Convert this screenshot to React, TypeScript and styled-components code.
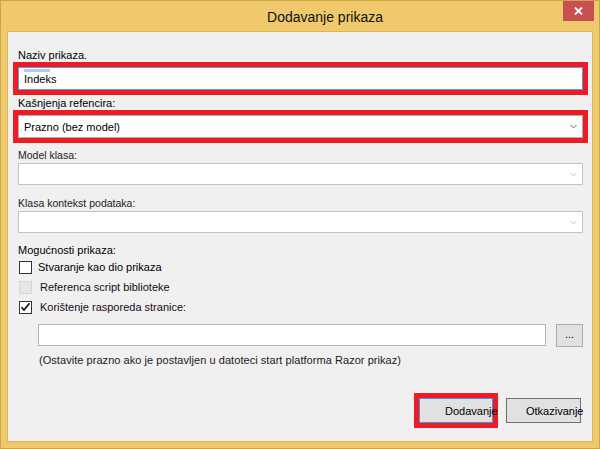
import React from 'react';
import styled, { createGlobalStyle } from 'styled-components';

const GlobalStyle = createGlobalStyle`
  html, body {
    margin: 0;
    padding: 0;
    background: #f0c96d;
  }
  body {
    font-family: "Liberation Sans", Arial, sans-serif;
  }
`;

const Window = styled.div`
  width: 600px;
  height: 449px;
  box-sizing: border-box;
  background: #f0c96d;
  border: 1px solid #c9a54b;
  display: flex;
  flex-direction: column;
`;

const TitleBar = styled.div`
  height: 29px;
  position: relative;
  display: flex;
  align-items: center;
  justify-content: center;
  font-size: 14px;
  color: #111;
  padding: 1px 0 0 50px;
`;

const CloseButton = styled.div`
  position: absolute;
  top: 0;
  right: 5px;
  width: 31px;
  height: 20px;
  background: #c75050;
  display: flex;
  align-items: center;
  justify-content: center;
`;

const Client = styled.div`
  flex: 1;
  margin: 0 6px 6px 6px;
  border: 1px solid #d9b55c;
  background: #f0f0f0;
  display: flex;
  flex-direction: column;
  padding: 0 9px 0 10px;
  font-size: 11px;
  color: #000;
`;

const Label = styled.div<{ $top: number; $small?: boolean }>`
  margin-top: ${p => p.$top}px;
  height: 14px;
  line-height: 14px;
  font-size: ${p => (p.$small ? '10.5px' : '11px')};
  color: ${p => (p.$small ? '#222' : '#000')};
`;

const Highlight = styled.div`
  margin: 0 -5px;
  border: 5px solid #ed1c24;
`;

const TextBox = styled.div<{ $focused?: boolean }>`
  position: relative;
  height: 23px;
  box-sizing: border-box;
  background: #fff;
  border: 1px solid ${p => (p.$focused ? '#5b9bd8' : '#b9b9b9')};
  display: flex;
  align-items: center;
  padding-left: 5px;
  font-size: 11px;
`;

const Selection = styled.span`
  position: absolute;
  left: 5px;
  top: 1px;
  width: 26px;
  height: 3px;
  background: #a9d0f3;
`;

const ComboBox = styled.div<{ $disabled?: boolean; $height: number }>`
  margin-top: ${p => (p.$disabled ? 1 : 0)}px;
  height: ${p => p.$height}px;
  box-sizing: border-box;
  background: #fff;
  border: 1px solid ${p => (p.$disabled ? '#c3c3c3' : '#acacac')};
  display: flex;
  align-items: center;
  justify-content: space-between;
  padding: 0 5px 0 5px;
  font-size: 11px;
`;

const Options = styled.div`
  display: flex;
  flex-direction: column;
`;

const CheckRow = styled.div<{ $disabled?: boolean }>`
  height: 20px;
  display: flex;
  align-items: center;
  gap: ${p => (p.$disabled ? 8 : 6)}px;
  padding-left: 1px;
  color: ${p => (p.$disabled ? '#1a0a1a' : '#000')};
`;

const Box = styled.div<{ $disabled?: boolean }>`
  width: 13px;
  height: 13px;
  box-sizing: border-box;
  border: 1px solid ${p => (p.$disabled ? '#d6d6d6' : '#333')};
  background: ${p => (p.$disabled ? '#e6e6e6' : '#fff')};
  display: flex;
  align-items: center;
  justify-content: center;
`;

const LayoutRow = styled.div`
  margin-top: 7px;
  padding-left: 20px;
  display: flex;
  gap: 10px;
  align-items: flex-start;
`;

const LayoutInput = styled.div`
  flex: 1;
  height: 22px;
  box-sizing: border-box;
  background: #fff;
  border: 1px solid #b4b4b4;
`;

const BrowseButton = styled.div`
  width: 27px;
  height: 23px;
  box-sizing: border-box;
  background: #e1e1e1;
  border: 1px solid #adadad;
  display: flex;
  align-items: center;
  justify-content: center;
  font-size: 11px;
  padding-bottom: 3px;
`;

const Hint = styled.div`
  margin-top: 6px;
  padding-left: 21px;
  height: 14px;
  line-height: 14px;
  font-size: 11px;
  letter-spacing: 0.05px;
  color: #1a1a1a;
`;

const Footer = styled.div`
  margin-top: auto;
  padding: 0 2px 18px 0;
  display: flex;
  justify-content: flex-end;
  align-items: center;
  gap: 13px;
`;

const ButtonFrame = styled.div`
  border: 5px solid #ed1c24;
  margin: -5px;
`;

const DialogButton = styled.div<{ $default?: boolean; $width: number; $indent: number }>`
  width: ${p => p.$width}px;
  height: 25px;
  box-sizing: border-box;
  background: #e1e1e1;
  border: 1px solid ${p => (p.$default ? '#3c95e6' : '#707070')};
  display: flex;
  align-items: center;
  padding-left: ${p => p.$indent}px;
  font-size: 11px;
  white-space: nowrap;
  overflow: visible;
`;

const Chevron = ({ color }: { color: string }) => (
  <svg width="7" height="5" viewBox="0 0 7 5">
    <path d="M0.5 1 L3.5 4 L6.5 1" fill="none" stroke={color} strokeWidth="1" />
  </svg>
);

export default function App() {
  return (
    <>
      <GlobalStyle />
      <Window>
        <TitleBar>
          Dodavanje prikaza
          <CloseButton>
            <svg width="9" height="8" viewBox="0 0 9 8">
              <path d="M1 0.5 L8 7.5 M8 0.5 L1 7.5" stroke="#fff" strokeWidth="1.8" />
            </svg>
          </CloseButton>
        </TitleBar>
        <Client>
          <Label $top={16}>Naziv prikaza.</Label>
          <Highlight>
            <TextBox $focused>
              <Selection />
              Indeks
            </TextBox>
          </Highlight>

          <Label $top={1}>Kašnjenja refencira:</Label>
          <Highlight>
            <ComboBox $height={23}>
              Prazno (bez model)
              <Chevron color="#6a6a6a" />
            </ComboBox>
          </Highlight>

          <Label $top={5} $small>Model klasa:</Label>
          <ComboBox $disabled $height={22}>
            <span />
            <Chevron color="#c4c4c4" />
          </ComboBox>

          <Label $top={11} $small>Klasa kontekst podataka:</Label>
          <ComboBox $disabled $height={22}>
            <span />
            <Chevron color="#c4c4c4" />
          </ComboBox>

          <Label $top={10}>Mogućnosti prikaza:</Label>
          <Options>
            <CheckRow>
              <Box />
              Stvaranje kao dio prikaza
            </CheckRow>
            <CheckRow $disabled>
              <Box $disabled />
              Referenca script biblioteke
            </CheckRow>
            <CheckRow $disabled>
              <Box>
                <svg width="11" height="10" viewBox="0 0 11 10">
                  <path d="M1.5 5.2 L4 8 L9.5 1.2" fill="none" stroke="#111" strokeWidth="1.7" />
                </svg>
              </Box>
              Korištenje rasporeda stranice:
            </CheckRow>
          </Options>

          <LayoutRow>
            <LayoutInput />
            <BrowseButton>...</BrowseButton>
          </LayoutRow>
          <Hint>(Ostavite prazno ako je postavljen u datoteci start platforma Razor prikaz)</Hint>

          <Footer>
            <ButtonFrame>
              <DialogButton $default $width={74} $indent={25}>Dodavanje</DialogButton>
            </ButtonFrame>
            <DialogButton $width={75} $indent={19}>Otkazivanje</DialogButton>
          </Footer>
        </Client>
      </Window>
    </>
  );
}
